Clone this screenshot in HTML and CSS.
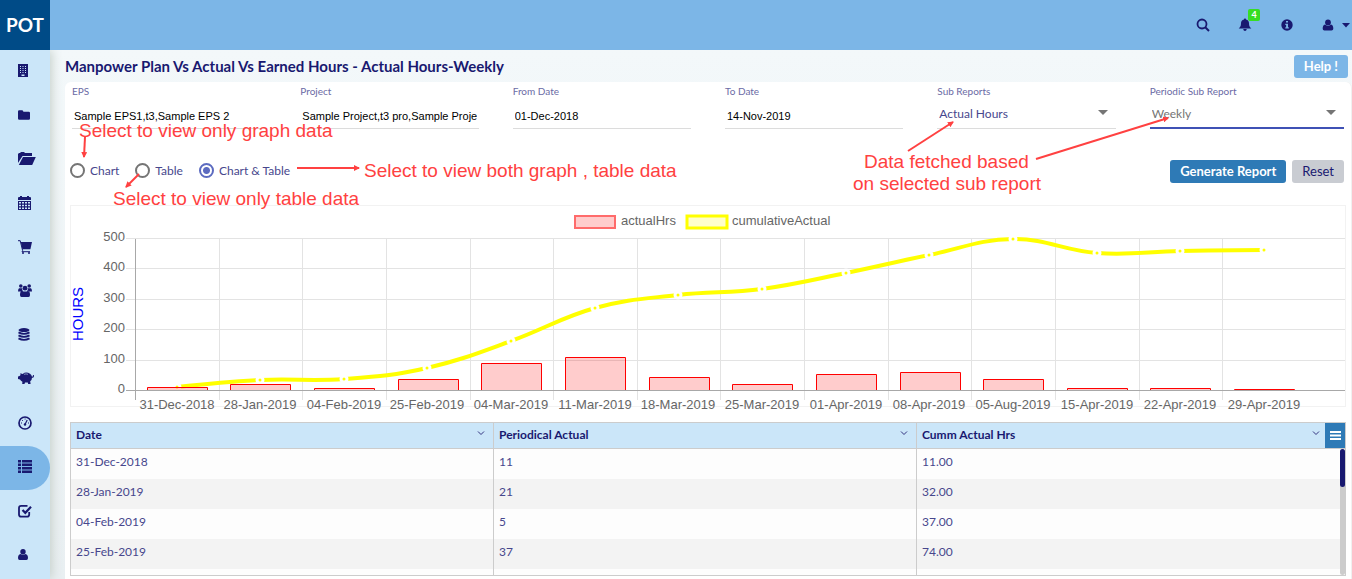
FILE: index.html
```html
<!DOCTYPE html>
<html lang="en">
<head>
<meta charset="utf-8">
<title>Manpower Plan Vs Actual Vs Earned Hours</title>
<link rel="stylesheet" href="styles.css">
</head>
<body>
<div class="app">
  <header class="topbar">
    <a class="brand" href="#">POT</a>
    <div class="actions">
      <button class="icon-btn" aria-label="Search"><svg width="14" height="14" viewBox="0 0 14 14"><circle cx="6" cy="6" r="4.500" fill="none" stroke="currentColor" stroke-width="1.800"/><path d="M9 9l4 4" stroke="currentColor" stroke-width="2"/></svg></button>
      <button class="icon-btn" aria-label="Notifications"><svg width="14" height="14" viewBox="0 0 14 14"><path d="M7 .5c.7 0 1 .4 1 1 2.200.4 3 2 3 4 0 2.500.9 3.600 2.300 5H.7c1.400-1.400 2.300-2.500 2.300-5 0-2 .8-3.600 3-4 0-.6.3-1 1-1zM5.300 11h3.400c0 2.500-3.400 2.500-3.400 0z" fill="currentColor"/></svg><span class="badge">4</span></button>
      <button class="icon-btn" aria-label="Information"><svg width="12" height="12" viewBox="0 0 12 12"><circle cx="6" cy="6" r="5.700" fill="currentColor"/><path d="M5 2h2v1.600H5zM4.300 4.700H7v3.600h.8v1.200H4.300V8.300h.8V5.900h-.8z" fill="#7cb6e7"/></svg></button>
      <button class="icon-btn user" aria-label="Account"><svg width="12" height="12" viewBox="0 0 12 12"><circle cx="6" cy="3.400" r="2.900" fill="currentColor"/><path d="M3 5.500c2 1.700 4 1.700 6 0 1.800.3 2.300 2.200 2.300 4 0 1.200-.7 2-1.800 2h-7C1.400 11.500.7 10.700.7 9.500c0-1.800.5-3.700 2.300-4z" fill="currentColor"/></svg><svg width="8" height="5" viewBox="0 0 8 5"><path d="M0 0h8L4 4.500z" fill="currentColor"/></svg></button>
    </div>
  </header>
  <nav class="sidebar" aria-label="Main">
    <a href="#" aria-label="Company"><svg width="10" height="14" viewBox="0 0 10 14"><path fill-rule="evenodd" fill="currentColor" d="M0 0h10v13H0zM2 2v1h1V2zm2.500 0v1h1V2zM7 2v1h1V2zM2 4v1h1V4zm2.500 0v1h1V4zM7 4v1h1V4zM2 6v1h1V6zm2.500 0v1h1V6zM7 6v1h1V6zM2 8v1h1V8zm2.500 0v1h1V8zM7 8v1h1V8zM3.500 10.500V12h3v-1.500z"/></svg></a>
    <a href="#" aria-label="Folder"><svg width="12" height="10" viewBox="0 0 12 10"><path fill="currentColor" d="M0 1.500Q0 .2 1.200.2h3Q5.200.2 5.400 1.800h5.400q1.200 0 1.200 1.200v5.600Q12 9.800 10.800 9.800H1.200Q0 9.800 0 8.600z"/></svg></a>
    <a href="#" aria-label="Open folder"><svg width="18" height="14" viewBox="0 0 18 14"><path fill="currentColor" d="M0 11V2l1-1h1.500V0h4v1H14v3H4.500zM5 5h12.800l-3.600 8H.8z"/></svg></a>
    <a href="#" aria-label="Calendar"><svg width="14" height="14" viewBox="0 0 14 14"><path fill="currentColor" d="M1 1h1V0h2v1h5V0h2v1h1q1 0 1 1v2H0V2q0-1 1-1z"/><path fill="currentColor" fill-rule="evenodd" d="M0 5h13v9H0zM1 6v1.500h2V6zm3 0v1.500h2V6zm3 0v1.500h2V6zm3 0v1.500h2V6zM1 8.700v1.500h2V8.700zm3 0v1.500h2V8.700zm3 0v1.500h2V8.700zm3 0v1.500h2V8.700zM1 11.400v1.500h2v-1.500zm3 0v1.500h2v-1.500zm3 0v1.500h2v-1.500zm3 0v1.500h2v-1.500z"/></svg></a>
    <a href="#" aria-label="Procurement"><svg width="14" height="14" viewBox="0 0 14 14"><path fill="currentColor" d="M2.800 2H14l-1.600 7.300H4.400z"/><path d="M0 .7h2.200l2.400 9.800L4 11.700h8" fill="none" stroke="currentColor"/><circle cx="5" cy="13" r="1" fill="currentColor"/><circle cx="11" cy="13" r="1" fill="currentColor"/></svg></a>
    <a href="#" aria-label="Teams"><svg width="14" height="13" viewBox="0 0 14 13"><g fill="currentColor"><circle cx="2.800" cy="2" r="1.800"/><circle cx="11.200" cy="2" r="1.800"/><circle cx="7" cy="4.200" r="2.400"/><path d="M1 4.200h3Q4 5.500 4.900 6.500L3 7.500H0Q0 5 1 4.200zM13 4.200h-3Q10 5.500 9.100 6.500l1.900 1h3Q14 5 13 4.200zM4 6.700q3 1.800 6 0 2 .5 2 4.300 0 2-1.500 2h-7Q2 13 2 11q0-3.800 2-4.300z"/></g></svg></a>
    <a href="#" aria-label="Database"><svg width="12" height="13" viewBox="0 0 12 13"><ellipse cx="6" cy="2.100" rx="5.500" ry="2" fill="currentColor"/><path d="M.5 4.400q5.500 3 11 0M.5 7.400q5.500 3 11 0M.5 10.400q5.500 3 11 0" fill="none" stroke="currentColor" stroke-width="1.800"/></svg></a>
    <a href="#" aria-label="Savings"><svg width="16" height="13" viewBox="0 0 16 13"><path fill="currentColor" d="M2.500 3L2.300 1.200 4.700 2Q8-.8 12 1.800q1.600 1.100 1.900 2.700h1V3h1v1.700l-.8 1H14q0 2.300-1.800 3.600l.4 2.700h-2.400l-.4-1.500H7L6.500 12H4.200l.2-2.300Q2.800 9 2 7.600L0 7V4.400l1.600-.3z"/><path d="M6 2.300q2-.8 4 0" stroke="#cbe6f9" fill="none" stroke-width=".6"/></svg></a>
    <a href="#" aria-label="Dashboard"><svg width="14" height="14" viewBox="0 0 14 14"><circle cx="7" cy="7" r="6" fill="none" stroke="currentColor" stroke-width="1.700"/><path d="M7 8.500L9.200 4" stroke="currentColor" stroke-width="1.200"/><circle cx="7" cy="8.500" r="1.200" fill="currentColor"/><path d="M3 7h1M10 7h1M4.200 4.200l.8.800M6.600 3h1" stroke="currentColor"/></svg></a>
    <a class="active" href="#" aria-label="Reports" aria-current="page"><svg width="14" height="13" viewBox="0 0 14 13"><path fill="currentColor" d="M0 0h3v2.600H0zM4 0h10v2.600H4zM0 3.500h3v2.600H0zM4 3.500h10v2.600H4zM0 7h3v2.600H0zM4 7h10v2.600H4zM0 10.400h3V13H0zM4 10.400h10V13H4z"/></svg></a>
    <a href="#" aria-label="Approvals"><svg width="14" height="14" viewBox="0 0 14 14"><path d="M9.500 1.800H3.200Q1 1.800 1 4v6.500q0 2.200 2.200 2.200H9q2.200 0 2.200-2.200V8" fill="none" stroke="currentColor" stroke-width="1.800"/><path d="M4.500 6l2.800 2.800 5.700-6" fill="none" stroke="currentColor" stroke-width="2.200"/></svg></a>
    <a href="#" aria-label="Users"><svg width="10" height="11" viewBox="0 0 10 11"><circle cx="5" cy="2.800" r="2.700" fill="currentColor"/><path d="M2.500 5q2.500 1.600 5 0Q10 5.500 10 9q0 2-1.600 2H1.600Q0 11 0 9q0-3.500 2.500-4z" fill="currentColor"/></svg></a>
  </nav>

  <main class="main">
    <div class="heading">
      <h1>Manpower Plan Vs Actual Vs Earned Hours - Actual Hours-Weekly</h1>
      <button class="btn help">Help !</button>
    </div>
    <section class="card">
      <form class="filters">
        <div class="field"><label for="eps">EPS</label><input id="eps" type="text" value="Sample EPS1,t3,Sample EPS 2"></div>
        <div class="field"><label for="project">Project</label><input id="project" type="text" value="Sample Project,t3 pro,Sample Project 2"></div>
        <div class="field"><label for="from">From Date</label><input id="from" type="text" value="01-Dec-2018"></div>
        <div class="field"><label for="to">To Date</label><input id="to" type="text" value="14-Nov-2019"></div>
        <div class="field"><label for="sub">Sub Reports</label><div class="select"><select id="sub"><option>Actual Hours</option></select></div></div>
        <div class="field focused"><label for="periodic">Periodic Sub Report</label><div class="select"><select id="periodic"><option>Weekly</option></select></div></div>
      </form>
      <div class="controls">
        <div class="views">
          <label><input type="radio" name="view">Chart</label>
          <label><input type="radio" name="view">Table</label>
          <label><input type="radio" name="view" checked>Chart &amp; Table</label>
        </div>
        <div class="buttons">
          <button class="btn primary">Generate Report</button>
          <button class="btn reset">Reset</button>
        </div>
      </div>

      <div class="chart">
        <svg viewBox="0 0 1274 200" role="img" aria-label="Actual hours and cumulative actual hours by week">
          <g class="grid">
            <path d="M55 32.500H1274M55 62.500H1274M55 93.500H1274M55 123.500H1274M55 154.500H1274"/>
            <path d="M148.500 33V194M231.500 33V194M315.500 33V194M399.500 33V194M482.500 33V194M566.500 33V194M649.500 33V194M733.500 33V194M817.500 33V194M900.500 33V194M984.500 33V194M1068.500 33V194M1151.500 33V194"/>
          </g>
          <path class="line" d="M106 181C106 181 156 175.600 189 174S240 175.400 273 173S323 169.600 356 162S407 147 440 135S491 111.200 524 102S574 92.800 607 89S658 87.400 691 83S742 73.800 775 67S825 55.800 858 49S909 33.400 942 33S993 44.600 1026 47S1076 45.600 1109 45S1193 44 1193 44"/>
          <g class="dots">
            <circle cx="106" cy="181" r="3"/><circle cx="189" cy="174" r="3"/><circle cx="273" cy="173" r="3"/><circle cx="356" cy="162" r="3"/><circle cx="440" cy="135" r="3"/><circle cx="524" cy="102" r="3"/><circle cx="607" cy="89" r="3"/><circle cx="691" cy="83" r="3"/><circle cx="775" cy="67" r="3"/><circle cx="858" cy="49" r="3"/><circle cx="942" cy="33" r="3"/><circle cx="1026" cy="47" r="3"/><circle cx="1109" cy="45" r="3"/><circle cx="1193" cy="44" r="3"/>
          </g>
          <g class="bars">
            <path d="M76.500 185V181.500h60V185"/><path d="M159.500 185V178.500h60V185"/><path d="M243.500 185V182.500h60V185"/><path d="M327.500 185V173.500h60V185"/><path d="M410.500 185V157.500h60V185"/><path d="M494.500 185V151.500h60V185"/><path d="M578.500 185V171.500h60V185"/><path d="M661.500 185V178.500h60V185"/><path d="M745.500 185V168.500h60V185"/><path d="M829.500 185V166.500h60V185"/><path d="M912.500 185V173.500h60V185"/><path d="M996.500 185V182.500h60V185"/><path d="M1079.500 185V182.500h60V185"/><path d="M1163.500 185V183.500h60V185"/>
          </g>
          <path class="axis" d="M55 184.500H1274M64.500 33V194"/>
          <g class="ticks end">
            <text x="54" y="35">500</text><text x="54" y="65">400</text><text x="54" y="96">300</text><text x="54" y="126">200</text><text x="54" y="157">100</text><text x="54" y="187">0</text>
          </g>
          <g class="ticks mid">
            <text x="106" y="203">31-Dec-2018</text><text x="189" y="203">28-Jan-2019</text><text x="273" y="203">04-Feb-2019</text><text x="356" y="203">25-Feb-2019</text><text x="440" y="203">04-Mar-2019</text><text x="524" y="203">11-Mar-2019</text><text x="607" y="203">18-Mar-2019</text><text x="691" y="203">25-Mar-2019</text><text x="775" y="203">01-Apr-2019</text><text x="858" y="203">08-Apr-2019</text><text x="942" y="203">05-Aug-2019</text><text x="1026" y="203">15-Apr-2019</text><text x="1109" y="203">22-Apr-2019</text><text x="1193" y="203">29-Apr-2019</text>
          </g>
          <text class="axis-title" transform="translate(12 108) rotate(-90)">HOURS</text>
          <rect class="key-bar" x="504" y="10" width="40" height="12"/>
          <rect class="key-line" x="616" y="10" width="40" height="12"/>
          <g class="ticks"><text x="550" y="19">actualHrs</text><text x="661" y="19">cumulativeActual</text></g>
        </svg>
      </div>

      <div class="table-box">
        <table>
          <thead><tr>
            <th><span>Date<svg width="8" height="5" viewBox="0 0 8 5"><path d="M1 .5l3 3 3-3"/></svg></span></th>
            <th><span>Periodical Actual<svg width="8" height="5" viewBox="0 0 8 5"><path d="M1 .5l3 3 3-3"/></svg></span></th>
            <th><span>Cumm Actual Hrs<svg width="8" height="5" viewBox="0 0 8 5"><path d="M1 .5l3 3 3-3"/></svg></span></th>
          </tr></thead>
          <tbody>
            <tr><td>31-Dec-2018</td><td>11</td><td>11.00</td></tr>
            <tr><td>28-Jan-2019</td><td>21</td><td>32.00</td></tr>
            <tr><td>04-Feb-2019</td><td>5</td><td>37.00</td></tr>
            <tr><td>25-Feb-2019</td><td>37</td><td>74.00</td></tr>
            <tr><td></td><td></td><td></td></tr>
          </tbody>
        </table>
        <button class="menu" aria-label="Table menu"><svg width="11" height="9" viewBox="0 0 11 9"><path d="M0 1h11M0 4.500h11M0 8h11" stroke="#fff" stroke-width="2"/></svg></button>
        <div class="track"><div class="thumb"></div></div>
      </div>

      <svg class="notes" width="1286" height="130" viewBox="0 0 1286 130">
        <defs><marker id="tip" viewBox="0 0 6 6" refX="5" refY="3" markerWidth="6" markerHeight="6" markerUnits="userSpaceOnUse" orient="auto"><path d="M0 0l6 3-6 3z" fill="#ff4141"/></marker></defs>
        <g class="arrows">
          <path d="M20 55L19 75" marker-end="url(#tip)"/>
          <path d="M74 92L61 105" marker-end="url(#tip)"/>
          <path d="M232 86H294" marker-end="url(#tip)"/>
          <path d="M843 69L888 40" marker-end="url(#tip)"/>
          <path d="M971 77L1103 36" marker-end="url(#tip)"/>
        </g>
        <text x="14" y="55">Select to view only graph data</text>
        <text x="48" y="123">Select to view only table data</text>
        <text x="299" y="95">Select to view both graph , table data</text>
        <text x="799" y="86">Data fetched based</text>
        <text x="788" y="108">on selected sub report</text>
      </svg>
    </section>
  </main>
</div>
</body>
</html>
```
FILE: styles.css
```css
* { box-sizing: border-box; }

body {
  margin: 0;
  font-family: Lato, "Liberation Sans", sans-serif;
  font-size: 12px;
  color: #191970;
}

button, input, select { font: inherit; color: inherit; }

.app {
  display: grid;
  grid-template: 50px minmax(0, 1fr) / 50px minmax(0, 1fr);
  height: 100vh;
  overflow: hidden;
}

.topbar {
  z-index: 2;
  grid-column: 1 / -1;
  display: flex;
  justify-content: space-between;
  background: #7cb6e7;
}

.brand {
  display: flex;
  align-items: center;
  justify-content: center;
  width: 50px;
  padding-bottom: 2px;
  background: #004b87;
  color: #fff;
  font-size: 19px;
  font-weight: 700;
  text-decoration: none;
}

.actions { display: flex; align-items: center; gap: 28px; padding-right: 2px; }

.icon-btn {
  position: relative;
  display: flex;
  align-items: center;
  justify-content: center;
  min-width: 14px;
  padding: 0;
  border: 0;
  background: none;
  color: #191970;
}

.user { gap: 8px; }

.badge {
  position: absolute;
  left: 10px;
  top: -9px;
  width: 12px;
  border-radius: 2px;
  background: #37dd22;
  color: #fff;
  font-size: 9px;
  font-weight: 700;
  line-height: 12px;
}

.sidebar {
  z-index: 1;
  display: flex;
  flex-direction: column;
  background: #cbe6f9;
  box-shadow: 2px 0 10px #c6d0ca;
}

.sidebar a {
  display: flex;
  flex: 0 0 44px;
  align-items: center;
  padding: 0 0 3px 18px;
  color: #191970;
}

.sidebar .active { border-radius: 0 22px 22px 0; background: #7cb6e7; }

.main {
  display: flex;
  flex-direction: column;
  min-width: 0;
  padding-left: 15px;
  background: linear-gradient(#f3f8fa, #e9eff2);
}

.heading {
  display: flex;
  align-items: center;
  justify-content: space-between;
  height: 32px;
  padding-right: 4px;
}

h1 { margin: 0; font-size: 15px; font-weight: 700; }

.btn {
  height: 23px;
  padding: 0 10px 1px;
  border: 0;
  border-radius: 3px;
  font-size: 13px;
  font-weight: 700;
}

.help { background: #7cb6e7; color: #fff; }
.primary { background: #2e7ab6; color: #fff; }
.reset { background: #c9ccd2; font-weight: 400; }

.card {
  position: relative;
  display: flex;
  flex: 1;
  flex-direction: column;
  min-height: 0;
  padding: 2px 6px 3px 5px;
  border-right: 1px solid #f0f0f0;
  border-radius: 6px 6px 0 0;
  background: #fff;
}

.card { padding-right: 5px; }

.filters {
  display: grid;
  grid-template-columns: 194fr repeat(4, 178fr) 194fr;
  gap: 34px;
  padding: 0 2px;
}

.field { display: flex; flex-direction: column; gap: 4px; min-width: 0; height: 47px; }
.field label { color: #6b6ba5; font-size: 10px; line-height: 14px; }

.field input,
.field select {
  width: 100%;
  height: 27px;
  border: 0;
  border-bottom: 1px solid #dcdcdc;
  border-radius: 0;
  outline: 0;
  background: none;
}

.field input {
  padding: 1px 2px 0;
  color: #000;
  font-family: "Liberation Sans", sans-serif;
  font-size: 11px;
}

.select { position: relative; }

.select::after {
  content: "";
  position: absolute;
  right: 8px;
  top: 8px;
  border: 5px solid transparent;
  border-top-color: #757575;
  border-bottom: 0;
  pointer-events: none;
}

.field select { padding: 0 20px 3px 2px; appearance: none; color: #47478d; }
.focused select { border-bottom: 2px solid #3f51b5; color: #757575; }

.controls {
  display: flex;
  align-items: center;
  justify-content: space-between;
  padding: 29px 2px 22px 0;
}

.views { display: flex; gap: 16px; }
.views label { display: flex; align-items: center; gap: 5px; padding-bottom: 2px; color: #47478d; }

.views input {
  width: 15px;
  height: 15px;
  margin: 0;
  border: 2px solid #757575;
  border-radius: 50%;
  appearance: none;
}

.views input:checked {
  border-color: #5c6bc0;
  background: radial-gradient(circle, #5c6bc0 3px, #fff 4px);
}

.buttons { display: flex; gap: 6px; }

.chart { border: 1px solid #f2f2f2; }
.chart svg { display: block; width: 100%; height: auto; overflow: visible; }

.grid path { fill: none; stroke: #e3e3e3; }
.axis { fill: none; stroke: #a8a8a8; }
.line { fill: none; stroke: #ff0; stroke-width: 4px; }
.dots { fill: #ff0; stroke: #fff; stroke-width: 3px; }
.bars { fill: #ff000033; stroke: #f00; }
.key-bar { fill: #fcc; stroke: #ff6b6b; stroke-width: 2px; }
.key-line { fill: #ffc; stroke: #ff0; stroke-width: 3px; }

.ticks { fill: #666; font-family: "Liberation Sans", sans-serif; font-size: 13px; }
.end { text-anchor: end; }
.mid { text-anchor: middle; }
.axis-title { fill: #00f; font-family: "Liberation Sans", sans-serif; font-size: 15px; text-anchor: middle; }

.table-box {
  position: relative;
  flex: 1;
  min-height: 0;
  margin-top: 15px;
  border: 1px solid #ccc;
  overflow: hidden;
}

table { width: 100%; border-collapse: separate; border-spacing: 0; table-layout: fixed; }

th {
  height: 26px;
  padding: 0 8px 2px 5px;
  border-bottom: 1px solid #ccc;
  background: #cbe6f9;
  text-align: left;
}

th:last-child { padding-right: 25px; }
th span { display: flex; align-items: center; justify-content: space-between; }
th svg { margin-bottom: 3px; fill: none; stroke: #33337f; }
th + th, td + td { border-left: 1px solid #ccc; }
th:first-child { width: 422px; }
th:nth-child(2) { width: 423px; }

td { height: 30px; padding: 0 5px 5px; background: #fdfdfd; color: #47478d; }
tbody tr:nth-child(even) td { background: #f3f3f3; }

.menu {
  position: absolute;
  right: 0;
  top: 0;
  display: grid;
  place-items: center;
  width: 20px;
  height: 25px;
  padding: 0;
  border: 0;
  background: #2e7ab6;
}

.track {
  position: absolute;
  right: 0;
  top: 26px;
  bottom: 0;
  width: 5px;
  border-radius: 3px;
  background: #ccc;
}

.thumb { height: 38px; border-radius: 3px; background: #191970; }

.notes { position: absolute; left: 0; top: 0; overflow: visible; pointer-events: none; }
.notes text { fill: #ff4141; font-family: "Liberation Sans", sans-serif; font-size: 19px; }
.arrows { fill: none; stroke: #ff4141; stroke-width: 2px; }
```
